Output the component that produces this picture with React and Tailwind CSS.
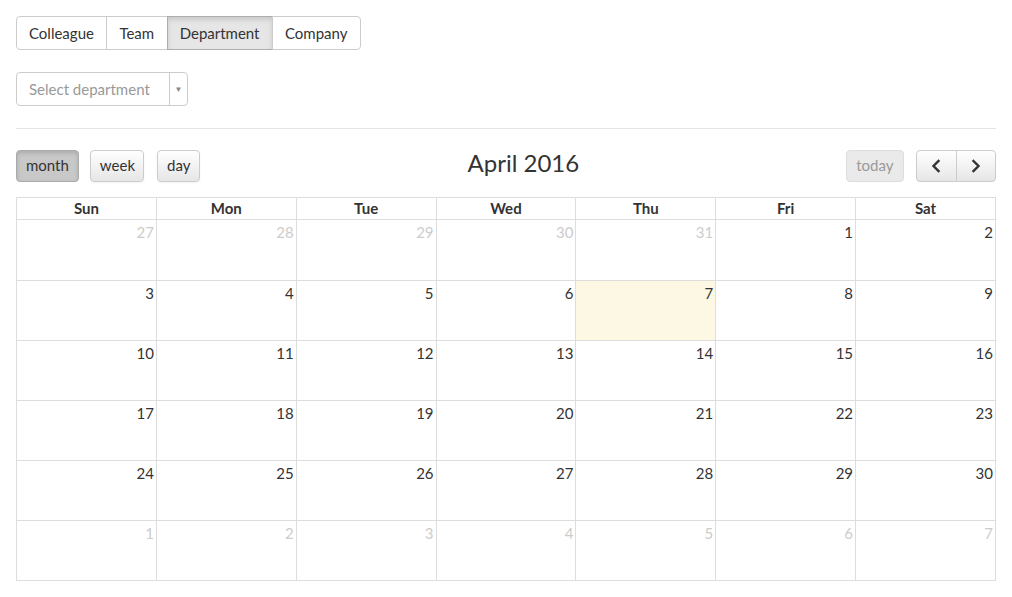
import React from "react";

const weeks = [
  [[27, 1], [28, 1], [29, 1], [30, 1], [31, 1], [1, 0], [2, 0]],
  [[3, 0], [4, 0], [5, 0], [6, 0], [7, 2], [8, 0], [9, 0]],
  [[10, 0], [11, 0], [12, 0], [13, 0], [14, 0], [15, 0], [16, 0]],
  [[17, 0], [18, 0], [19, 0], [20, 0], [21, 0], [22, 0], [23, 0]],
  [[24, 0], [25, 0], [26, 0], [27, 0], [28, 0], [29, 0], [30, 0]],
  [[1, 1], [2, 1], [3, 1], [4, 1], [5, 1], [6, 1], [7, 1]],
];
const days = ["Sun", "Mon", "Tue", "Wed", "Thu", "Fri", "Sat"];

function Chevron({ dir }) {
  return (
    <svg width="10" height="14" viewBox="0 0 10 14" fill="none">
      {dir === "left" ? (
        <path d="M7.5 2 L2.5 7 L7.5 12" stroke="#333" strokeWidth="2.4" strokeLinecap="square" strokeLinejoin="miter" />
      ) : (
        <path d="M2.5 2 L7.5 7 L2.5 12" stroke="#333" strokeWidth="2.4" strokeLinecap="square" strokeLinejoin="miter" />
      )}
    </svg>
  );
}

export default function App() {
  return (
    <div className="min-h-[597px] bg-white px-4 pt-4 text-[#333]" style={{ fontFamily: "Lato, 'Open Sans', sans-serif" }}>
      <div className="inline-flex h-[34px] text-[15px]">
        <button className="rounded-l-[4px] border border-[#ccc] bg-white pl-3 pr-[12.5px] leading-[32px]">Colleague</button>
        <button className="-ml-px border border-[#ccc] bg-white pl-3 pr-[12.5px] leading-[32px]">Team</button>
        <button className="-ml-px border border-[#adadad] bg-[#e6e6e6] pl-3 pr-[12.5px] leading-[32px] shadow-[inset_0_3px_5px_rgba(0,0,0,0.125)]">Department</button>
        <button className="-ml-px rounded-r-[4px] border border-[#ccc] bg-white pl-3 pr-[12.5px] leading-[32px]">Company</button>
      </div>

      <div className="mt-[22px] flex h-[34px] w-[172px] rounded-[4px] border border-[#ccc] text-[15px]">
        <div className="flex-1 pl-3 leading-[32px] text-[#999]">Select department</div>
        <div className="flex w-[18px] items-center justify-center border-l border-[#ccc] text-[8px] text-[#888]">▼</div>
      </div>

      <div className="mt-[22px] h-px w-[980px] bg-[#e5e5e5]" />

      <div className="mt-[21px] flex h-[32px] w-[980px] items-center justify-between">
        <div className="flex text-[15px]">
          <button className="h-[32px] rounded-[4px] border border-[#aaa] bg-[#c8c8c8] px-[9px] pb-[2px] text-[#333] shadow-[inset_0_2px_4px_rgba(0,0,0,0.15)]">month</button>
          <button className="ml-[11px] h-[32px] rounded-[4px] border border-[#ccc] bg-gradient-to-b from-white to-[#e6e6e6] pb-[2px] pl-[9px] pr-[8px] shadow-[0_1px_2px_rgba(0,0,0,0.05)]">week</button>
          <button className="ml-[13px] h-[32px] rounded-[4px] border border-[#ccc] bg-gradient-to-b from-white to-[#e6e6e6] px-[9px] pb-[2px] shadow-[0_1px_2px_rgba(0,0,0,0.05)]">day</button>
        </div>
        <div className="mb-[6px] text-[24px] leading-none text-[#333]">April 2016</div>
        <div className="flex gap-[12px] text-[15px]">
          <button className="h-[32px] rounded-[4px] border border-[#ddd] bg-[#eaeaea] pb-[2px] pl-[9px] pr-[9.5px] text-[#999]">today</button>
          <div className="flex">
            <button className="flex h-[32px] w-[41px] items-center justify-center rounded-l-[4px] border border-[#ccc] bg-gradient-to-b from-white to-[#e6e6e6]"><Chevron dir="left" /></button>
            <button className="-ml-px flex h-[32px] w-[40px] items-center justify-center rounded-r-[4px] border border-[#ccc] bg-gradient-to-b from-white to-[#e6e6e6]"><Chevron dir="right" /></button>
          </div>
        </div>
      </div>

      <table className="mt-[15px] w-[980px] table-fixed border-collapse text-[15px]">
        <thead>
          <tr>
            {days.map((d) => (
              <th key={d} className="h-[22px] border border-[#ddd] p-0 pb-[2px] text-center font-bold leading-[18px]">{d}</th>
            ))}
          </tr>
        </thead>
        <tbody>
          {weeks.map((w, i) => (
            <tr key={i}>
              {w.map(([n, t], j) => (
                <td
                  key={j}
                  className={`${i === 0 ? "h-[61px]" : "h-[60px]"} border border-[#ddd] p-0 pr-[2px] pt-[2px] text-right align-top leading-[20px] ${t === 2 ? "bg-[#fcf8e3]" : ""} ${t === 1 ? "text-[#ccc]" : "text-[#333]"}`}
                >
                  {n}
                </td>
              ))}
            </tr>
          ))}
        </tbody>
      </table>
    </div>
  );
}
